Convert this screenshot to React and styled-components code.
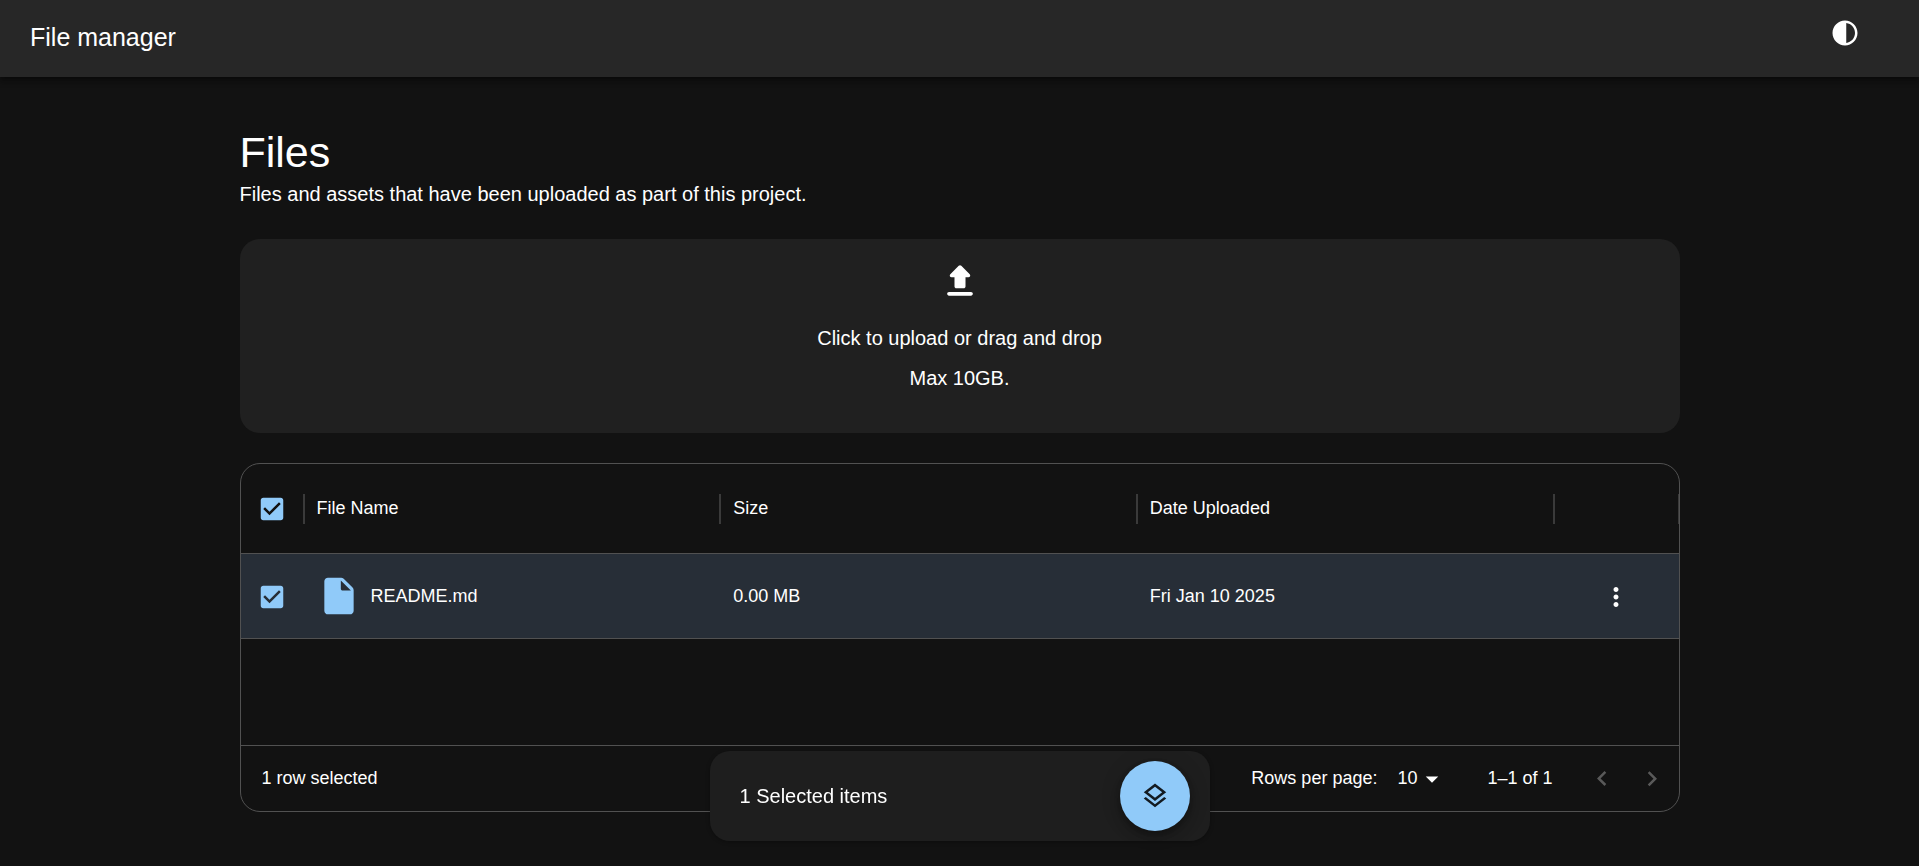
import React, { useState } from "react";
import styled, { createGlobalStyle } from "styled-components";

const GlobalStyle = createGlobalStyle`
  *, *::before, *::after { box-sizing: border-box; }
  html, body { margin: 0; background: #121212; }
  body {
    color: #fff;
    font: 20px/30px Arial, "Liberation Sans", Helvetica, sans-serif;
  }
  #root { min-height: 100vh; }
`;

const paths = {
  contrast:
    "M12 22c5.52 0 10-4.48 10-10S17.52 2 12 2 2 6.48 2 12s4.48 10 10 10zm1-17.93c3.94.49 7 3.85 7 7.93s-3.05 7.44-7 7.93V4.07z",
  upload:
    "M10 16h4c.55 0 1-.45 1-1v-5h1.59c.89 0 1.34-1.08.71-1.71L12.71 3.7a.9959.9959 0 0 0-1.41 0L6.71 8.29c-.63.63-.19 1.71.7 1.71H9v5c0 .55.45 1 1 1zm-4 2h12c.55 0 1 .45 1 1s-.45 1-1 1H6c-.55 0-1-.45-1-1s.45-1 1-1z",
  checked:
    "M19 3H5c-1.11 0-2 .9-2 2v14c0 1.1.89 2 2 2h14c1.11 0 2-.9 2-2V5c0-1.1-.89-2-2-2zm-9 14l-5-5 1.41-1.41L10 14.17l7.59-7.59L19 8l-9 9z",
  unchecked:
    "M19 5v14H5V5h14m0-2H5c-1.1 0-2 .9-2 2v14c0 1.1.9 2 2 2h14c1.1 0 2-.9 2-2V5c0-1.1-.9-2-2-2z",
  file:
    "M4 4c0-1.1.89-2 1.99-2h7.17c.53 0 1.04.21 1.41.59l4.83 4.83c.38.37.59.88.59 1.41V20c0 1.1-.9 2-2 2H5.99C4.89 22 4 21.1 4 20V4zm9-.5V8c0 .55.45 1 1 1h4.5L13 3.5z",
  more:
    "M12 8c1.1 0 2-.9 2-2s-.9-2-2-2-2 .9-2 2 .9 2 2 2zm0 2c-1.1 0-2 .9-2 2s.9 2 2 2 2-.9 2-2-.9-2-2-2zm0 6c-1.1 0-2 .9-2 2s.9 2 2 2 2-.9 2-2-.9-2-2-2z",
  dropDown: "M7 10l5 5 5-5z",
  left: "M15.41 16.09l-4.58-4.59 4.58-4.59L14 5.5l-6 6 6 6z",
  right: "M8.59 16.34l4.58-4.59-4.58-4.59L10 5.75l6 6-6 6z",
  layers:
    "m11.99 18.54-7.37-5.73L3 14.07l9 7 9-7-1.63-1.27zM12 16l7.36-5.73L21 9l-9-7-9 7 1.63 1.27zm0-11.47L17.74 9 12 13.47 6.26 9z",
};

const Svg = styled.svg`
  display: block;
  flex: none;
  width: ${(p) => p.$size}px;
  height: ${(p) => p.$size}px;
  fill: currentColor;
`;

const Icon = ({ name, size = 30, ...rest }) => (
  <Svg viewBox="0 0 24 24" $size={size} aria-hidden="true" {...rest}>
    <path d={paths[name]} />
  </Svg>
);

const AppBar = styled.header`
  position: relative;
  display: flex;
  align-items: flex-start;
  justify-content: space-between;
  height: 77px;
  padding: 8px 49px 0 30px;
  background: #272727;
  box-shadow: 0 2px 5px rgba(0, 0, 0, 0.3), 0 5px 6px rgba(0, 0, 0, 0.2);
`;

const AppTitle = styled.div`
  padding-top: 9px;
  font-size: 25px;
  line-height: 40px;
`;

const IconButton = styled.button`
  display: grid;
  place-items: center;
  width: 50px;
  height: 50px;
  padding: 0;
  border: 0;
  border-radius: 50%;
  background: none;
  color: #fff;
  cursor: pointer;

  &:disabled {
    color: rgba(255, 255, 255, 0.3);
    cursor: default;
  }
`;

const Page = styled.main`
  display: flex;
  flex-direction: column;
  gap: 30px;
  max-width: 1440px;
  margin: 0 auto;
  padding: 50px 0 54px;
`;

const PageTitle = styled.h1`
  margin: 0 0 2px;
  font-size: 43px;
  font-weight: 400;
  line-height: 50px;
`;

const PageText = styled.p`
  margin: 0;
`;

const DropZone = styled.button`
  display: flex;
  flex-direction: column;
  align-items: center;
  padding: 20px 20px 40px;
  border: 0;
  border-radius: 20px;
  background: #202020;
  color: inherit;
  font: inherit;
  cursor: pointer;
`;

const DropLabel = styled.span`
  margin: 20px 0 10px;
`;

const Grid = styled.section`
  border: 1px solid #515151;
  border-radius: 20px;
  overflow: hidden;
  font-size: 18px;
  line-height: 26px;
`;

const GridBody = styled.div`
  min-height: 281px;
`;

const Table = styled.table`
  width: 100%;
  table-layout: fixed;
  border-collapse: separate;
  border-spacing: 0;
`;

const Col = styled.col`
  width: ${(p) => p.$width}px;
`;

const cell = `
  border-bottom: 1px solid #515151;
  text-align: left;
  font-weight: 400;
`;

const HeadCell = styled.th`
  ${cell}
  position: relative;
  height: 90px;
  padding: 0 13px ${(p) => (p.$control ? 0 : 2)}px;

  &::after {
    content: "";
    position: absolute;
    top: 30px;
    right: -1px;
    width: 2px;
    height: 30px;
    background: #3a3a3a;
  }
`;

const Cell = styled.td`
  ${cell}
  height: 85px;
  padding: ${(p) => (p.$control ? 2 : 0)}px 13px 0;
`;

const Row = styled.tr`
  background: ${(p) => (p.$selected ? "#272e37" : "transparent")};
`;

const FileName = styled.div`
  display: flex;
  align-items: center;
  gap: 10px;
`;

const FileIcon = styled(Icon)`
  color: #90caf9;
`;

const Centered = styled.div`
  display: grid;
  place-items: center;
  margin: 0 -13px;
`;

const CheckLabel = styled.label`
  display: grid;
  color: ${(p) => (p.$on ? "#90caf9" : "#fff")};
  cursor: pointer;

  & > * {
    grid-area: 1 / 1;
  }
`;

const CheckInput = styled.input`
  width: 30px;
  height: 30px;
  margin: 0;
  opacity: 0;
  cursor: pointer;
`;

const Checkbox = ({ label, checked, onChange }) => (
  <Centered>
    <CheckLabel $on={checked}>
      <CheckInput
        type="checkbox"
        aria-label={label}
        checked={checked}
        onChange={(e) => onChange(e.target.checked)}
      />
      <Icon name={checked ? "checked" : "unchecked"} />
    </CheckLabel>
  </Centered>
);

const Footer = styled.footer`
  display: flex;
  align-items: center;
  justify-content: space-between;
  height: 66px;
  padding: 0 2px 0 21px;
  border-top: 1px solid #515151;
`;

const FooterText = styled.span`
  padding-bottom: 2px;
`;

const Pagination = styled.div`
  display: flex;
  align-items: center;
`;

const SelectWrap = styled.div`
  display: grid;
  align-items: center;
  margin: 0 40px 0 20px;

  & > * {
    grid-area: 1 / 1;
  }
`;

const Select = styled.select`
  width: 50px;
  padding: 0 0 2px;
  border: 0;
  appearance: none;
  background: transparent;
  color: inherit;
  font: inherit;
  cursor: pointer;

  option {
    background: #1e1e1e;
  }
`;

const SelectArrow = styled(Icon)`
  justify-self: end;
  pointer-events: none;
`;

const Range = styled(FooterText)`
  margin-right: 24px;
`;

const SelectionBar = styled.aside`
  position: fixed;
  left: 50%;
  bottom: 25px;
  display: flex;
  align-items: center;
  justify-content: space-between;
  width: 500px;
  max-width: 100%;
  padding: 10px 20px 10px 30px;
  border-radius: 20px;
  background: #1e1e1e;
  box-shadow: 0 1px 4px rgba(0, 0, 0, 0.3);
  transform: translateX(-50%);
`;

const Fab = styled.button`
  display: grid;
  place-items: center;
  width: 70px;
  height: 70px;
  padding: 0;
  border: 0;
  border-radius: 50%;
  background: #90caf9;
  color: rgba(0, 0, 0, 0.87);
  box-shadow: 0 4px 6px rgba(0, 0, 0, 0.2), 0 7px 12px rgba(0, 0, 0, 0.14),
    0 1px 22px rgba(0, 0, 0, 0.12);
  cursor: pointer;
`;

const files = [{ name: "README.md", size: "0.00 MB", date: "Fri Jan 10 2025" }];

export default function App() {
  const [selected, setSelected] = useState(["README.md"]);
  const count = selected.length;

  const toggle = (name, on) =>
    setSelected((list) => (on ? [...list, name] : list.filter((n) => n !== name)));

  return (
    <>
      <GlobalStyle />
      <AppBar>
        <AppTitle>File manager</AppTitle>
        <IconButton aria-label="Toggle theme">
          <Icon name="contrast" />
        </IconButton>
      </AppBar>

      <Page>
        <div>
          <PageTitle>Files</PageTitle>
          <PageText>
            Files and assets that have been uploaded as part of this project.
          </PageText>
        </div>

        <DropZone type="button">
          <Icon name="upload" size={44} />
          <DropLabel>Click to upload or drag and drop</DropLabel>
          <span>Max 10GB.</span>
        </DropZone>

        <Grid>
          <GridBody>
            <Table>
              <colgroup>
                <Col $width={63} />
                <col />
                <col />
                <col />
                <Col $width={125} />
              </colgroup>
              <thead>
                <tr>
                  <HeadCell $control>
                    <Checkbox
                      label="Select all rows"
                      checked={count === files.length}
                      onChange={(on) => setSelected(on ? files.map((f) => f.name) : [])}
                    />
                  </HeadCell>
                  <HeadCell>File Name</HeadCell>
                  <HeadCell>Size</HeadCell>
                  <HeadCell>Date Uploaded</HeadCell>
                  <HeadCell aria-label="Actions" />
                </tr>
              </thead>
              <tbody>
                {files.map((file) => (
                  <Row key={file.name} $selected={selected.includes(file.name)}>
                    <Cell $control>
                      <Checkbox
                        label={`Select ${file.name}`}
                        checked={selected.includes(file.name)}
                        onChange={(on) => toggle(file.name, on)}
                      />
                    </Cell>
                    <Cell>
                      <FileName>
                        <FileIcon name="file" size={44} />
                        {file.name}
                      </FileName>
                    </Cell>
                    <Cell>{file.size}</Cell>
                    <Cell>{file.date}</Cell>
                    <Cell $control>
                      <Centered>
                        <IconButton aria-label="File actions">
                          <Icon name="more" />
                        </IconButton>
                      </Centered>
                    </Cell>
                  </Row>
                ))}
              </tbody>
            </Table>
          </GridBody>

          <Footer>
            <FooterText>{count} row selected</FooterText>
            <Pagination>
              <FooterText as="label" htmlFor="page-size">
                Rows per page:
              </FooterText>
              <SelectWrap>
                <Select id="page-size" defaultValue="10">
                  <option>10</option>
                  <option>25</option>
                  <option>50</option>
                </Select>
                <SelectArrow name="dropDown" />
              </SelectWrap>
              <Range>1–1 of 1</Range>
              <IconButton aria-label="Previous page" disabled>
                <Icon name="left" />
              </IconButton>
              <IconButton aria-label="Next page" disabled>
                <Icon name="right" />
              </IconButton>
            </Pagination>
          </Footer>
        </Grid>
      </Page>

      {count > 0 && (
        <SelectionBar>
          <span>{count} Selected items</span>
          <Fab aria-label="Actions for selected items">
            <Icon name="layers" />
          </Fab>
        </SelectionBar>
      )}
    </>
  );
}
